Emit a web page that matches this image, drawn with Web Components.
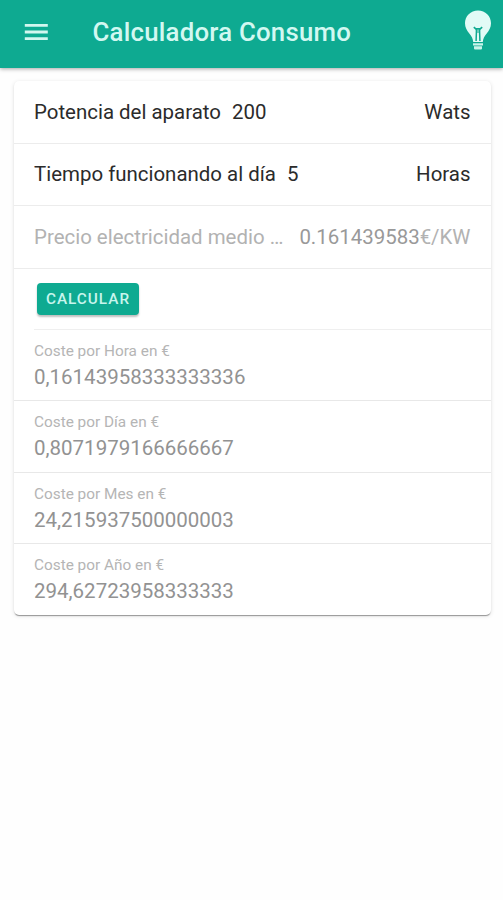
<!DOCTYPE html>
<html lang="es">
<head>
<meta charset="utf-8">
<meta name="viewport" content="width=device-width, initial-scale=1">
<title>Calculadora Consumo</title>
<style>
    body {
        margin: 0;
        background: #fefefe;
        font-family: Roboto, "Liberation Sans", sans-serif;
    }
</style>
</head>
<body>
<calc-app></calc-app>

<script>
class CalcHeader extends HTMLElement{
    constructor(){
        super();
        this.attachShadow({mode : 'open'});
    }

    connectedCallback(){
        this.shadowRoot.innerHTML = `
        <style>${this.getStyle()}</style>
        <svg class="menu" viewBox="0 0 24 18" aria-label="Menu">
            <path d="M.8 2.4h23M.8 9h23M.8 15.6h23"/>
        </svg>
        <h1><slot></slot></h1>
        <svg class="bulb" viewBox="0 0 28 40">
            <path fill="#e2fbf6" d="M14 0.5C6.6 0.5 1 6.2 1 13.2c0 4.4 1.9 7.2 4.3 10.2 2.3 2.9 3.7 5.2 3.9 8.6h9.6c.2-3.4 1.6-5.7 3.9-8.6 2.4-3 4.3-5.8 4.3-10.2C27 6.2 21.4.5 14 .5z"/>
            <path fill="none" stroke="#0eaa91" stroke-width="1.7" d="M9.8 17.2l2 1.6h4.4l2-1.6"/>
            <path fill="none" stroke="#0eaa91" stroke-width="1.5" d="M12.4 19v3l-.3 9M15.6 19v3l.3 9"/>
            <path fill="none" stroke="#3fbba6" stroke-width="1.4" d="M14 19v4"/>
            <path fill="#c9f4ea" d="M9 33.2h10v2.2H9zM10 36.2h8v2.3q0 1-1 1h-6q-1 0-1-1z"/>
        </svg>
        `;
    }

    getStyle(){
        return`
        :host {
            display: flex;
            align-items: center;
            box-sizing: border-box;
            height: 68px;
            padding: 0 11px 4px 24px;
            background: #0eaa91;
            box-shadow: 0 1px 4px rgba(0,0,0,0.35);
        }

        .menu {
            width: 24px;
            height: 18px;
            fill: none;
            stroke: #d2f7ef;
            stroke-width: 2.8;
        }

        h1 {
            flex: 1;
            margin: 0 0 0 44.5px;
            color: #d2f8f1;
            font-size: 25.8px;
            font-weight: 500;
            letter-spacing: 0.22px;
            line-height: 32px;
            white-space: nowrap;
        }

        .bulb {
            width: 28px;
            height: 40px;
            margin-top: -4px;
        }
        `
    }
}

class CalcCard extends HTMLElement{
    constructor(){
        super();
        this.attachShadow({mode : 'open'});
    }

    connectedCallback(){
        this.shadowRoot.innerHTML = `
        <style>
        :host {
            display: block;
            margin: 13px 12px 0 14px;
            overflow: hidden;
            background: white;
            border-radius: 5px;
            box-shadow: 0 2px 1px -1px rgba(0,0,0,0.28), 0 1px 1px rgba(0,0,0,0.12), 0 1px 4px rgba(0,0,0,0.12);
        }
        </style>
        <slot></slot>
        `;
    }
}

// One line of the form: label, value and an optional unit on the right
class CalcRow extends HTMLElement{
    constructor(){
        super();
        this.attachShadow({mode : 'open'});
    }

    connectedCallback(){
        this.shadowRoot.innerHTML = `
        <style>${this.getStyle()}</style>
        <span class="label"><slot></slot></span>
        <span class="value"><slot name="value"></slot></span>
        <span class="unit"><slot name="unit"></slot></span>
        `;
    }

    getStyle(){
        return`
        :host {
            display: flex;
            align-items: center;
            box-sizing: border-box;
            height: 62.5px;
            padding: 0 20.5px 0 20px;
            border-bottom: 1px solid #ececec;
            color: #2b2b2b;
            font-size: 20.45px;
            line-height: 28px;
            white-space: nowrap;
        }

        .label {
            overflow: hidden;
            text-overflow: ellipsis;
        }

        .value {
            margin-left: 11px;
        }

        .unit {
            margin-left: auto;
        }

        :host([disabled]) {
            color: #b2b2b2;
        }

        :host([disabled]) .label {
            width: 251px;
        }

        :host([disabled]) .value {
            margin-left: 15px;
            color: #999;
        }
        `
    }
}

class CalcButton extends HTMLElement{
    constructor(){
        super();
        this.attachShadow({mode : 'open'});
    }

    connectedCallback(){
        this.shadowRoot.innerHTML = `
        <style>${this.getStyle()}</style>
        <button type="button"><slot></slot></button>
        `;
    }

    getStyle(){
        return`
        :host {
            display: flex;
            align-items: flex-start;
            box-sizing: border-box;
            height: 61.5px;
            margin-left: 20px;
            padding: 14px 0 0 3px;
            border-bottom: 1px solid #efefef;
        }

        button {
            width: 102px;
            height: 32.5px;
            padding: 0;
            border: none;
            border-radius: 4px;
            background: #0eaa91;
            box-shadow: 0 2px 2px rgba(0,0,0,0.25);
            color: #c8f5ed;
            font: 500 15.3px/32px Roboto, "Liberation Sans", sans-serif;
            letter-spacing: 1px;
            text-transform: uppercase;
            cursor: pointer;
        }
        `
    }
}

class CalcResult extends HTMLElement{
    constructor(){
        super();
        this.attachShadow({mode : 'open'});
    }

    connectedCallback(){
        this.shadowRoot.innerHTML = `
        <style>${this.getStyle()}</style>
        <div class="label"><slot></slot></div>
        <div class="value"><slot name="value"></slot></div>
        `;
    }

    getStyle(){
        return`
        :host {
            display: block;
            box-sizing: border-box;
            height: 71.4px;
            padding: 11px 20px 0;
            border-bottom: 1px solid #e8e8e8;
        }

        :host(:last-of-type) {
            height: 70.4px;
            border-bottom: none;
        }

        .label {
            color: #b5b5b5;
            font-size: 15.35px;
            line-height: 20px;
        }

        .value {
            margin-top: 3px;
            color: #929292;
            font-size: 20.5px;
            line-height: 26px;
        }
        `
    }
}

class CalcApp extends HTMLElement{
    constructor(){
        super();
        this.attachShadow({mode : 'open'});
    }

    connectedCallback(){
        this.shadowRoot.innerHTML = `
        <style>
        :host {
            display: block;
            min-height: 100vh;
        }
        </style>
        <calc-header>Calculadora Consumo</calc-header>
        <calc-card>
            <calc-row>Potencia del aparato<span slot="value">200</span><span slot="unit">Wats</span></calc-row>
            <calc-row>Tiempo funcionando al día<span slot="value">5</span><span slot="unit">Horas</span></calc-row>
            <calc-row disabled>Precio electricidad medio ...<span slot="value">0.161439583</span><span slot="unit">€/KW</span></calc-row>
            <calc-button>Calcular</calc-button>
            <calc-result>Coste por Hora en €<span slot="value">0,16143958333333336</span></calc-result>
            <calc-result>Coste por Día en €<span slot="value">0,8071979166666667</span></calc-result>
            <calc-result>Coste por Mes en €<span slot="value">24,215937500000003</span></calc-result>
            <calc-result>Coste por Año en €<span slot="value">294,62723958333333</span></calc-result>
        </calc-card>
        `;
    }
}

customElements.define('calc-header', CalcHeader);
customElements.define('calc-card', CalcCard);
customElements.define('calc-row', CalcRow);
customElements.define('calc-button', CalcButton);
customElements.define('calc-result', CalcResult);
customElements.define('calc-app', CalcApp);
</script>
</body>
</html>
